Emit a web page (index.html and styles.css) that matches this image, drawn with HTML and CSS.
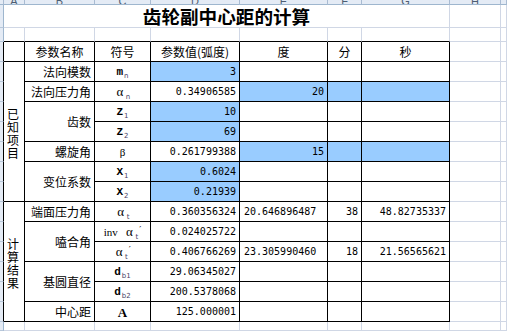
FILE: index.html
```html
<!DOCTYPE html>
<html lang="zh-CN">
<head>
<meta charset="utf-8">
<title>齿轮副中心距的计算</title>
<link rel="stylesheet" href="styles.css">
</head>
<body>
<div class="sheet">
  <!-- column header strip -->
  <div class="c hd"></div>
  <div class="c hd"><span>A</span></div>
  <div class="c hd"><span>B</span></div>
  <div class="c hd"><span>C</span></div>
  <div class="c hd"><span>D</span></div>
  <div class="c hd"><span>E</span></div>
  <div class="c hd"><span>F</span></div>
  <div class="c hd"><span>G</span></div>
  <div class="c hd"><span>H</span></div>
  <div class="c hd"></div>

  <!-- row 1: title -->
  <div class="c rh"></div>
  <div class="c cs7 title">齿轮副中心距的计算</div>
  <div class="c"></div>
  <div class="c"></div>

  <!-- row 2 -->
  <div class="c rh"></div>
  <div class="c bb"></div><div class="c bb"></div><div class="c bb"></div><div class="c bb"></div>
  <div class="c bb"></div><div class="c bb"></div><div class="c bb"></div>
  <div class="c"></div><div class="c"></div>

  <!-- table header -->
  <div class="c rh k"></div>
  <div class="c k"></div>
  <div class="c k ctr">参数名称</div>
  <div class="c k ctr">符号</div>
  <div class="c k ctr">参数值(弧度)</div>
  <div class="c k ctr">度</div>
  <div class="c k ctr">分</div>
  <div class="c k ctr">秒</div>
  <div class="c"></div><div class="c"></div>

  <!-- 法向模数 -->
  <div class="c rh k"></div>
  <div class="c k rs7 vt">已<br>知<br>项<br>目</div>
  <div class="c k rt">法向模数</div>
  <div class="c k sym"><span class="s">m<sub>n</sub></span></div>
  <div class="c k num blue">3</div>
  <div class="c k"></div><div class="c k"></div><div class="c k"></div>
  <div class="c"></div><div class="c"></div>

  <!-- 法向压力角 -->
  <div class="c rh k"></div>
  <div class="c k rt">法向压力角</div>
  <div class="c k sym"><span class="s"><span class="al">α</span><sub>n</sub></span></div>
  <div class="c k num">0.34906585</div>
  <div class="c k num blue">20</div><div class="c k blue"></div><div class="c k blue"></div>
  <div class="c"></div><div class="c"></div>

  <!-- Z1 -->
  <div class="c rh k"></div>
  <div class="c k rs2 rt">齿数</div>
  <div class="c k sym"><span class="s">Z<sub>1</sub></span></div>
  <div class="c k num blue">10</div>
  <div class="c k"></div><div class="c k"></div><div class="c k"></div>
  <div class="c"></div><div class="c"></div>

  <!-- Z2 -->
  <div class="c rh k"></div>
  <div class="c k sym"><span class="s">Z<sub>2</sub></span></div>
  <div class="c k num blue">69</div>
  <div class="c k"></div><div class="c k"></div><div class="c k"></div>
  <div class="c"></div><div class="c"></div>

  <!-- 螺旋角 -->
  <div class="c rh k"></div>
  <div class="c k rt">螺旋角</div>
  <div class="c k sym beta">β</div>
  <div class="c k num">0.261799388</div>
  <div class="c k num blue">15</div><div class="c k blue"></div><div class="c k blue"></div>
  <div class="c"></div><div class="c"></div>

  <!-- X1 -->
  <div class="c rh k"></div>
  <div class="c k rs2 rt">变位系数</div>
  <div class="c k sym"><span class="s">X<sub>1</sub></span></div>
  <div class="c k num blue">0.6024</div>
  <div class="c k"></div><div class="c k"></div><div class="c k"></div>
  <div class="c"></div><div class="c"></div>

  <!-- X2 -->
  <div class="c rh k"></div>
  <div class="c k sym"><span class="s">X<sub>2</sub></span></div>
  <div class="c k num blue">0.21939</div>
  <div class="c k"></div><div class="c k"></div><div class="c k"></div>
  <div class="c"></div><div class="c"></div>

  <!-- 端面压力角 -->
  <div class="c rh k"></div>
  <div class="c k rs6 vt">计<br>算<br>结<br>果</div>
  <div class="c k rt">端面压力角</div>
  <div class="c k sym"><span class="s"><span class="al">α</span><sub>t</sub></span></div>
  <div class="c k num">0.360356324</div>
  <div class="c k num lt">20.646896487</div>
  <div class="c k num">38</div>
  <div class="c k num">48.82735337</div>
  <div class="c"></div><div class="c"></div>

  <!-- inv -->
  <div class="c rh k"></div>
  <div class="c k rs2 rt">嗑合角</div>
  <div class="c k sym"><span class="s"><span class="inv">inv</span>&nbsp;<span class="al">α</span><sub>t</sub><span class="pr">′</span></span></div>
  <div class="c k num">0.024025722</div>
  <div class="c k"></div><div class="c k"></div><div class="c k"></div>
  <div class="c"></div><div class="c"></div>

  <!-- αt' -->
  <div class="c rh k"></div>
  <div class="c k sym"><span class="s"><span class="al">α</span><sub>t</sub><span class="pr">′</span></span></div>
  <div class="c k num">0.406766269</div>
  <div class="c k num lt">23.305990460</div>
  <div class="c k num">18</div>
  <div class="c k num">21.56565621</div>
  <div class="c"></div><div class="c"></div>

  <!-- db1 -->
  <div class="c rh k"></div>
  <div class="c k rs2 rt">基圆直径</div>
  <div class="c k sym"><span class="s">d<sub>b1</sub></span></div>
  <div class="c k num">29.06345027</div>
  <div class="c k"></div><div class="c k"></div><div class="c k"></div>
  <div class="c"></div><div class="c"></div>

  <!-- db2 -->
  <div class="c rh k"></div>
  <div class="c k sym"><span class="s">d<sub>b2</sub></span></div>
  <div class="c k num">200.5378068</div>
  <div class="c k"></div><div class="c k"></div><div class="c k"></div>
  <div class="c"></div><div class="c"></div>

  <!-- 中心距 -->
  <div class="c rh k"></div>
  <div class="c k rt">中心距</div>
  <div class="c k sym bigA">A</div>
  <div class="c k num">125.000001</div>
  <div class="c k"></div><div class="c k"></div><div class="c k"></div>
  <div class="c"></div><div class="c"></div>

  <!-- row below -->
  <div class="c rh"></div>
  <div class="c"></div><div class="c"></div><div class="c"></div><div class="c"></div>
  <div class="c"></div><div class="c"></div><div class="c"></div><div class="c"></div><div class="c"></div>
</div>
</body>
</html>
```

FILE: styles.css
```css
html, body {
  margin: 0;
  padding: 0;
  background: #fff;
}

body {
  width: 507px;
  height: 331px;
  overflow: hidden;
  font-family: "Noto Sans CJK SC", sans-serif;
  font-size: 12px;
  color: #000;
}

.sheet {
  display: grid;
  grid-template-columns: 4px 21px 70px 56px 89px 88px 34px 88px 51px 6px;
  grid-template-rows: 5px 23px 14px repeat(14, 20px) 9px;
  overflow: hidden;
}

.c {
  box-sizing: border-box;
  border-right: 1px solid #d0d7e5;
  border-bottom: 1px solid #d0d7e5;
  overflow: hidden;
  display: flex;
  align-items: center;
  min-width: 0;
  white-space: nowrap;
  line-height: 1;
}

.k {
  border-right-color: #000;
  border-bottom-color: #000;
}

.bb {
  border-bottom-color: #000;
}

.hd {
  background: #e4ebf5;
  border-right-color: #a9bbd2;
  border-bottom-color: #9eb6ce;
  align-items: flex-end;
  justify-content: center;
  overflow: hidden;
}

.hd span {
  font-family: "Liberation Sans", sans-serif;
  font-size: 11px;
  line-height: 11px;
  color: #4d5d72;
  margin-bottom: -3px;
  flex: none;
}

.rh {
  background: #e4ebf5;
  border-right-color: #9eb6ce;
  border-bottom-color: #b7c7da;
}

.rh.k {
  border-right-color: #000;
}

.cs7 { grid-column: span 7; }
.rs2 { grid-row: span 2; }
.rs6 { grid-row: span 6; }
.rs7 { grid-row: span 7; }

.title {
  justify-content: center;
  font-size: 18.6px;
  font-weight: bold;
  padding-top: 1px;
}

.ctr {
  justify-content: center;
}

.rt {
  justify-content: flex-end;
  padding-right: 3px;
}

.vt {
  justify-content: center;
  text-align: center;
  line-height: 13px;
  padding-top: 3px;
  padding-right: 2px;
}

.blue {
  background: #99ccff;
}

.num {
  justify-content: flex-end;
  padding-right: 3px;
  font-family: "DejaVu Sans Mono", monospace;
  font-size: 10px;
  padding-top: 1px;
}

.num.lt {
  justify-content: flex-start;
  padding-right: 0;
  padding-left: 4px;
}

.sym {
  justify-content: center;
  font-family: "Liberation Mono", monospace;
  font-size: 11px;
  font-weight: bold;
  padding-top: 1px;
}

.sym .s {
  display: inline-block;
  line-height: 12px;
}

.sym .inv {
  font-weight: normal;
  font-family: "Liberation Serif", serif;
  font-size: 11px;
}

.sym sub {
  font-family: "DejaVu Sans", sans-serif;
  font-weight: normal;
  font-size: 7px;
  vertical-align: -3px;
  line-height: 0;
  color: #4a3f66;
  margin-left: 1px;
}

.sym .al {
  font-family: "Liberation Serif", serif;
  font-weight: normal;
  font-size: 13px;
  display: inline-block;
  width: 10px;
  text-align: center;
}

.sym .pr {
  font-family: "DejaVu Sans", sans-serif;
  font-weight: normal;
  font-size: 9px;
  margin-left: 1px;
  position: relative;
  top: -3px;
}

.beta {
  font-family: "Liberation Serif", serif;
  font-weight: normal;
  font-size: 11px;
}

.bigA {
  font-family: "Liberation Serif", serif;
  font-size: 13px;
  font-weight: bold;
}
```
